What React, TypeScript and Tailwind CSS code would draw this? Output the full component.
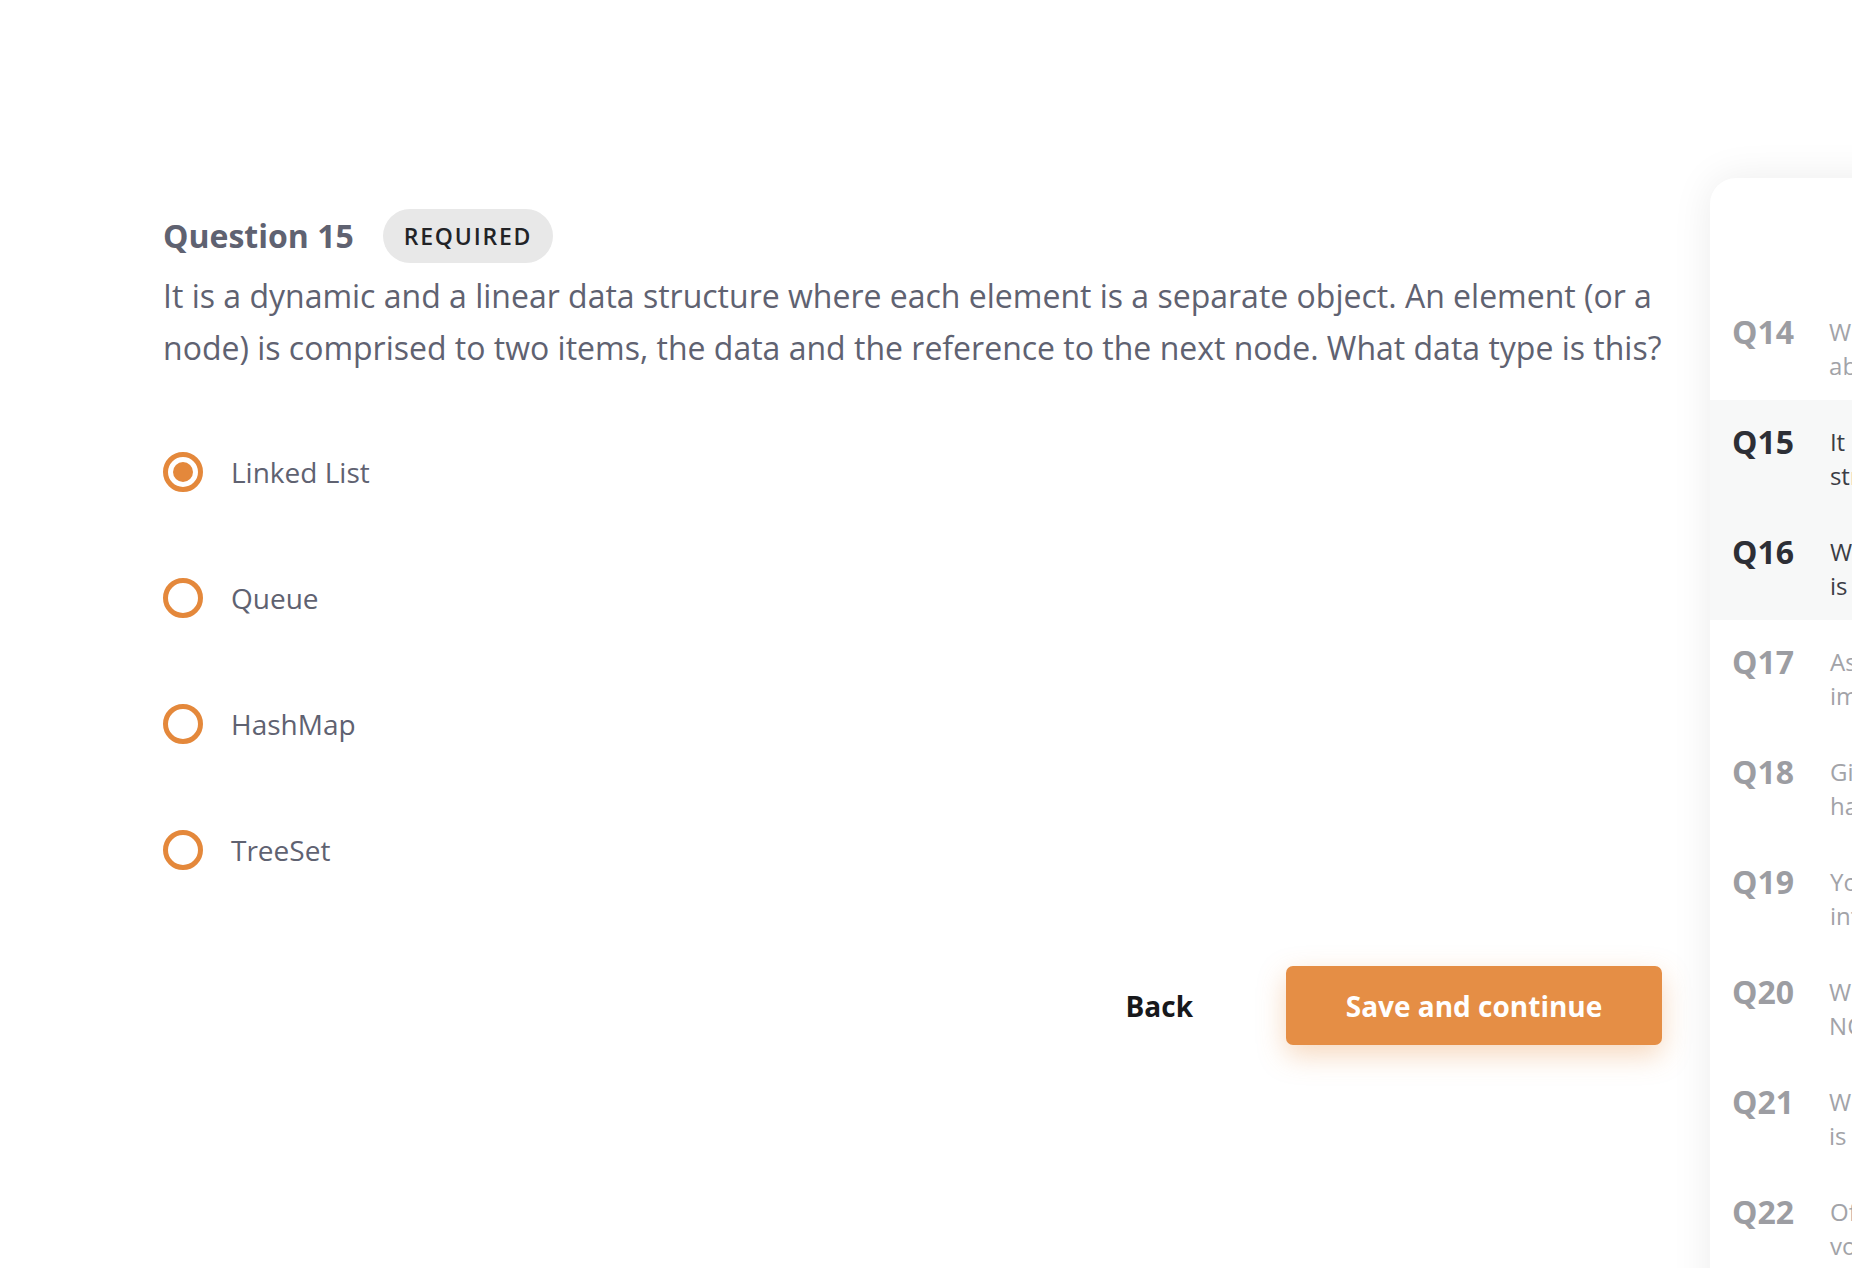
import { useState } from 'react';

const options = ['Linked List', 'Queue', 'HashMap', 'TreeSet'];

const sideItems = [
  { n: 14, a: 'Which of the following best describes', b: 'about a binary search tree?', tone: 'muted' },
  { n: 15, a: 'It is a dynamic and a linear data', b: 'structure where each element is', tone: 'active' },
  { n: 16, a: 'What is the time complexity of', b: 'is searching in a sorted array?', tone: 'active' },
  { n: 17, a: 'Assuming the following code is', b: 'implemented in Java, what will', tone: 'muted' },
  { n: 18, a: 'Given an array of integers that', b: 'has duplicates, which approach', tone: 'muted' },
  { n: 19, a: 'You need to store a collection of', b: 'integers with fast lookup. Which', tone: 'muted' },
  { n: 20, a: 'Which of the following statements', b: 'NOT true about a stack?', tone: 'muted' },
  { n: 21, a: 'What happens when a hash table', b: 'is full and a new key is added?', tone: 'muted' },
  { n: 22, a: 'Of the sorting algorithms below,', b: 'volume of data is best handled', tone: 'muted' },
];

export default function App() {
  const [selected, setSelected] = useState('Linked List');

  return <div className="w-[1852px] h-[1268px] overflow-hidden bg-white font-['Open_Sans',_'Noto_Sans',_sans-serif]">
    <div className="flex pl-[163px] gap-[48px]">
      <main className="w-[1499px] shrink-0 pt-[209px]">
        <div className="flex items-center gap-[29px]">
          <h2 className="text-[32px] font-bold text-[#5f6271] leading-none">Question 15</h2>
          <span className="h-[54px] px-[21px] rounded-full bg-[#e8e8e8] flex items-center text-[23px] font-semibold tracking-[1.8px] text-[#222326]">REQUIRED</span>
        </div>
        <p className="mt-[7px] text-[32px] leading-[52px] text-[#5f6271]">
          It is a dynamic and a linear data structure where each element is a separate object. An element (or a node) is comprised to two items, the data and the reference to the next node. What data type is this?
        </p>
        <div className="mt-[35px]">
          {options.map((o) => (
            <label key={o} className="h-[126px] flex items-center gap-[28px] cursor-pointer" onClick={() => setSelected(o)}>
              <span className="w-[40px] h-[40px] rounded-full border-[5px] border-[#e4883b] flex items-center justify-center">
                {selected === o && <span className="w-[20px] h-[20px] rounded-full bg-[#e4883b]" />}
              </span>
              <span className="text-[28px] text-[#5f6271]">{o}</span>
            </label>
          ))}
        </div>
        <div className="mt-[53px] flex items-center justify-end gap-[93px]">
          <button className="text-[28px] font-bold text-[#17181b]">Back</button>
          <button className="w-[376px] h-[79px] rounded-[7px] bg-[#e58e45] text-white text-[28px] font-bold shadow-[0_10px_28px_rgba(229,142,69,0.35)]">Save and continue</button>
        </div>
      </main>
      <aside className="mt-[178px] w-[480px] shrink-0 h-[1200px] bg-white rounded-tl-[26px] shadow-[0_0_40px_rgba(0,0,0,0.08)] pt-[112px]">
        {sideItems.map((q) => (
          <div key={q.n} className={`h-[110px] flex items-start gap-[35px] pl-[22px] pt-[24px] ${q.tone === 'active' ? 'bg-[#f7f8f8]' : ''}`}>
            <span className={`w-[63px] text-[32px] font-bold leading-[36px] ${q.tone === 'active' ? 'text-[#2d2f36]' : 'text-[#9c9da2]'}`}>Q{q.n}</span>
            <div className={`text-[24px] leading-[34px] pt-[1px] whitespace-nowrap ${q.tone === 'active' ? 'text-[#3b3d45]' : 'text-[#a2a3a8]'}`}>
              <div>{q.a}</div>
              <div>{q.b}</div>
            </div>
          </div>
        ))}
      </aside>
    </div>
  </div>;
}
